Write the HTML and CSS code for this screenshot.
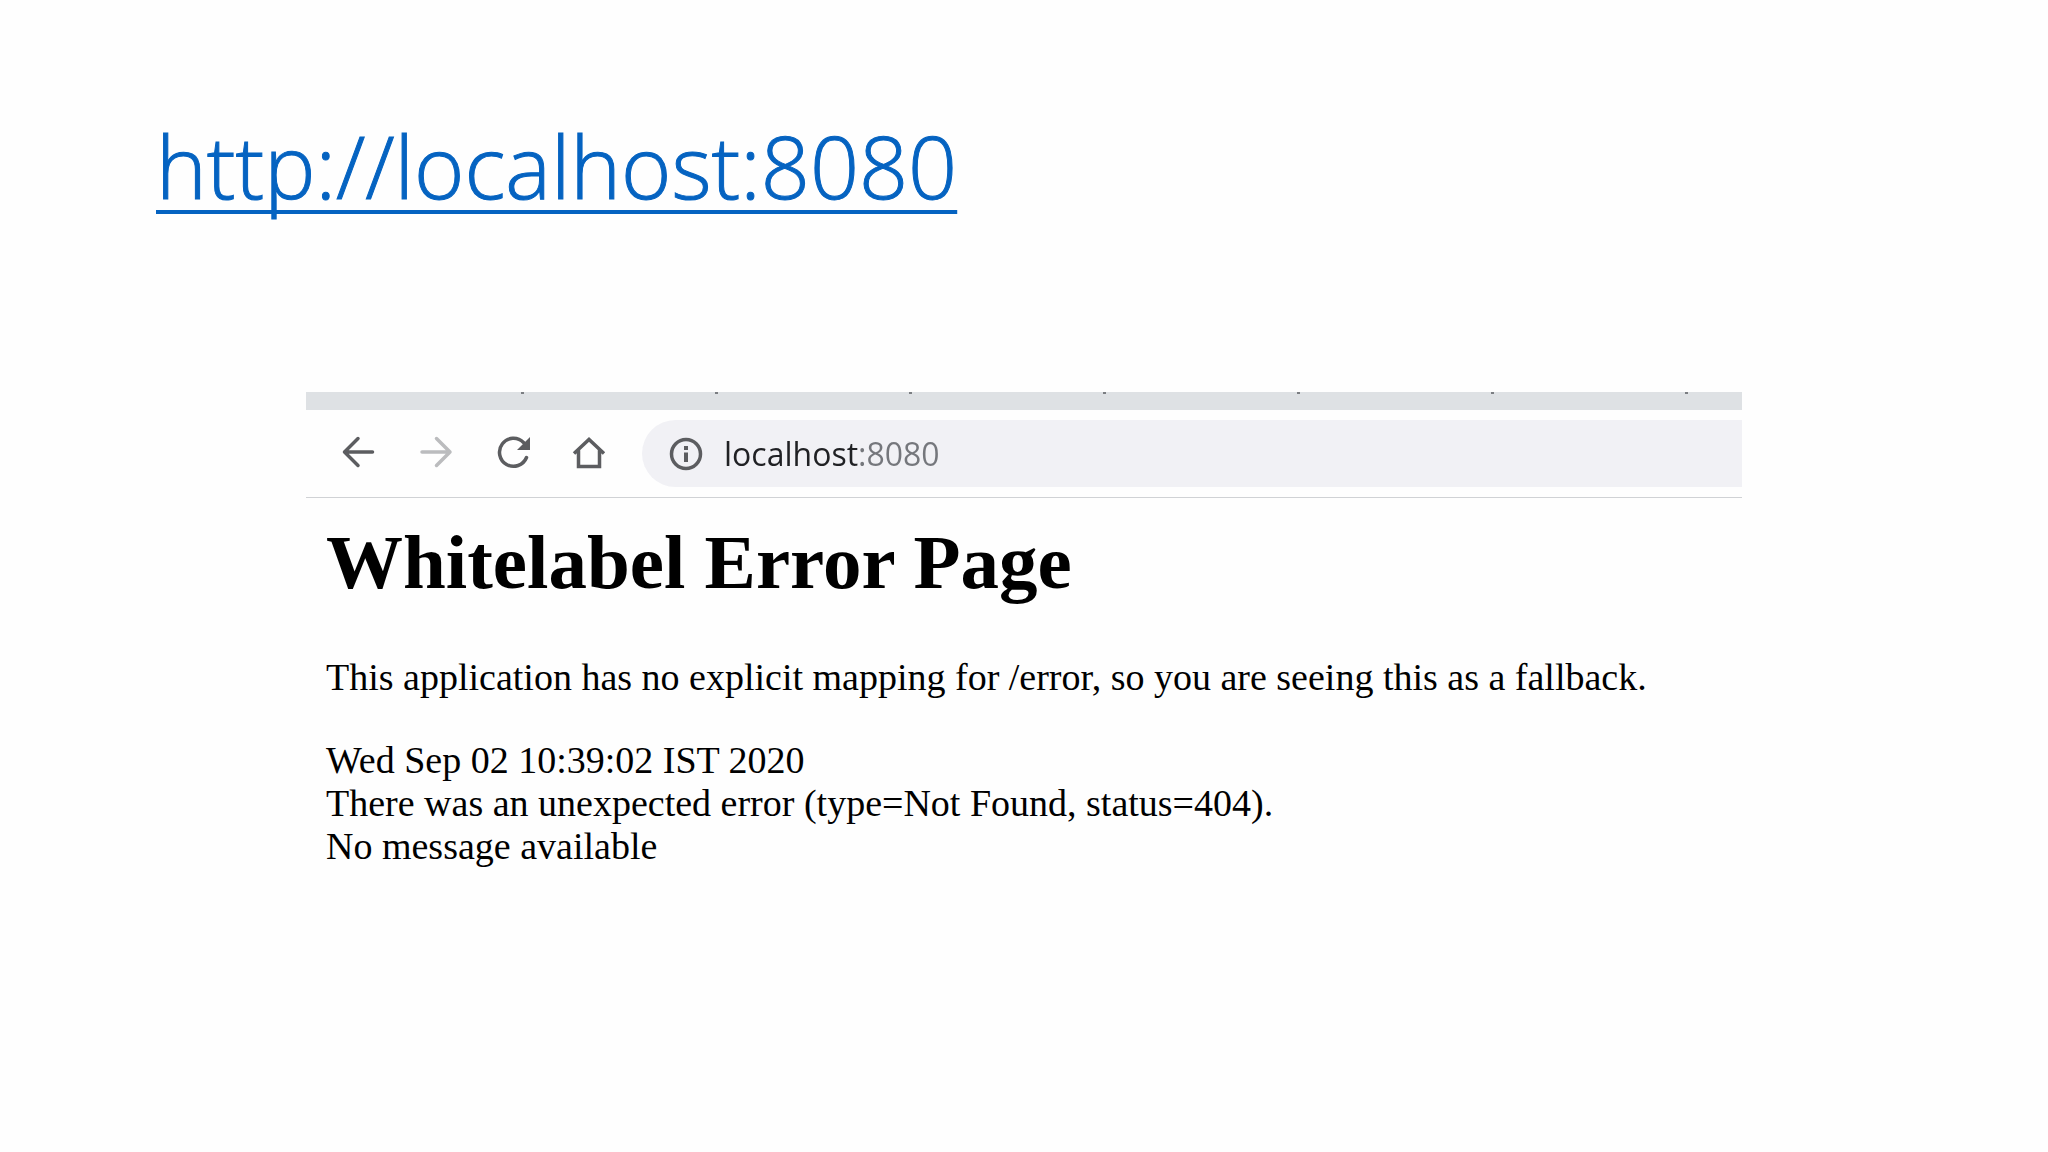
FILE: index.html
```html
<!DOCTYPE html>
<html lang="en">
<head>
  <meta charset="utf-8">
  <title>http://localhost:8080</title>
  <meta name="viewport" content="width=device-width, initial-scale=1">
  <link rel="stylesheet" href="styles.css">
</head>
<body>
  <main class="slide">
    <h1 class="slide-title"><a href="http://localhost:8080">http://localhost:8080</a></h1>

    <section class="browser" aria-label="Browser window">
      <div class="tab-strip" aria-hidden="true">
        <span class="tab"></span><span class="tab"></span><span class="tab"></span><span class="tab"></span><span class="tab"></span><span class="tab"></span><span class="tab"></span>
      </div>

      <div class="toolbar">
        <div class="nav">
          <button class="nav-button" type="button" aria-label="Back">
            <svg viewBox="0 0 36 36"><path d="M31.500 18H3.500M17 4.500L3.500 18L17 31.500"/></svg>
          </button>
          <button class="nav-button" type="button" aria-label="Forward" disabled>
            <svg viewBox="0 0 36 36"><path d="M4 18H32M18.500 4.500L32 18L18.500 31.500"/></svg>
          </button>
          <button class="nav-button" type="button" aria-label="Reload">
            <svg viewBox="0 0 36 36"><path d="M31.500 23.500A14 14 0 1 1 28.500 8.500"/><path class="solid" d="M35 3V16H22Z"/></svg>
          </button>
          <button class="nav-button" type="button" aria-label="Home">
            <svg viewBox="0 0 36 36"><path class="mitred" d="M2 19.500L17 5.500L32 19.500M6.500 16V32.500H27.500V16"/></svg>
          </button>
        </div>
        <label class="address">
          <svg class="info" viewBox="0 0 36 36" role="img" aria-label="Site information"><circle cx="18" cy="18" r="14.500"/><path class="letter" d="M18 16.500V26M18 10V14"/></svg>
          <input class="url" type="text" value="localhost:8080" aria-label="Address" spellcheck="false">
        </label>
      </div>

      <article class="page">
        <h2 class="page-title">Whitelabel Error Page</h2>
        <p>This application has no explicit mapping for /error, so you are seeing this as a fallback.</p>
        <div>Wed Sep 02 10:39:02 IST 2020</div>
        <div>There was an unexpected error (type=Not Found, status=404).</div>
        <div>No message available</div>
      </article>
    </section>
  </main>
</body>
</html>
```

FILE: styles.css
```css
* {
  box-sizing: border-box;
}

body {
  margin: 0;
  background: #fefefe;
  color: #000;
}

.slide {
  padding: 106px 306px 64px;
}

.slide-title {
  margin: 0 0 166px -150px;
  font-family: "Open Sans", "Noto Sans", sans-serif;
  font-size: 86px;
  font-weight: 300;
  line-height: 120px;
}

.slide-title a {
  color: #0563c1;
  -webkit-text-stroke: 1px #0563c1;
  text-decoration-line: underline;
  text-decoration-thickness: 4px;
  text-decoration-skip-ink: none;
  text-underline-offset: 11px;
}

/* Tab strip */
.tab-strip {
  display: flex;
  height: 18px;
  overflow: hidden;
  background: #dee1e4;
}

.tab {
  flex: 0 0 194px;
  display: flex;
  justify-content: flex-end;
}

.tab:first-child {
  flex-basis: 218px;
}

.tab::after {
  content: "";
  width: 3px;
  height: 2px;
  background: #7b7e82;
}

/* Toolbar */
.toolbar {
  display: flex;
  align-items: center;
  height: 88px;
  padding-left: 35px;
  border-bottom: 1px solid #d0d2d5;
}

.nav {
  display: flex;
  gap: 41px;
  margin: 0 34px 4px 0;
}

.nav-button {
  width: 36px;
  height: 36px;
  padding: 0;
  border: 0;
  background: none;
}

.nav-button svg,
.info {
  display: block;
  width: 36px;
  height: 36px;
  fill: none;
  stroke: #5c5d60;
  stroke-width: 3.5;
}

.nav-button svg {
  stroke-linecap: round;
  stroke-linejoin: round;
}

.nav-button:disabled svg {
  stroke: #bbbcbe;
}

.nav-button .solid {
  fill: #5c5d60;
  stroke: none;
}

.nav-button .mitred {
  stroke-linecap: butt;
  stroke-linejoin: miter;
}

.info .letter {
  stroke-width: 4;
}

.address {
  flex: 1;
  display: flex;
  align-items: center;
  gap: 20px;
  height: 67px;
  padding-left: 26px;
  border-radius: 34px 0 0 34px;
  background: #f1f1f5;
}

.info {
  flex: none;
}

/* The host is dark and the port is grey */
.url {
  flex: 1;
  min-width: 0;
  height: 48px;
  padding: 0;
  border: 0;
  outline: 0;
  background: linear-gradient(to right, #202124 134px, #75777c 134px);
  background-clip: text;
  -webkit-text-fill-color: transparent;
  color: #202124;
  font-family: "Open Sans", "Noto Sans", sans-serif;
  font-size: 32px;
}

/* Page shown in the browser */
.page {
  padding: 22px 20px;
  font-family: "Liberation Serif", "Times New Roman", serif;
  font-size: 38px;
  line-height: 43px;
}

.page-title {
  margin: 0 0 52px;
  font-size: 77px;
  font-weight: 700;
  line-height: 84px;
}

.page p {
  margin: 0 0 40px;
}
```
